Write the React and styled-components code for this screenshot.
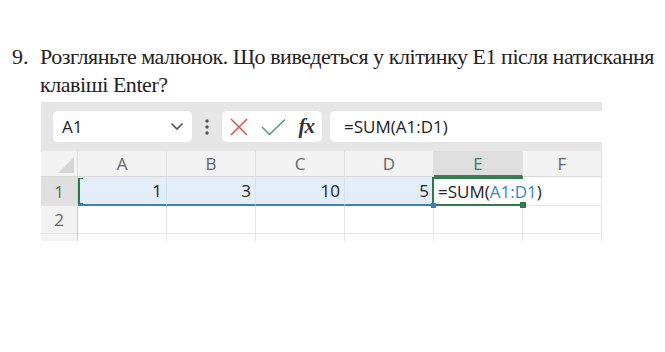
import React from "react";
import styled, { createGlobalStyle } from "styled-components";

const Global = createGlobalStyle`
body{
  margin:0;
  background:#fff;
}
`
const Page = styled.div`
width:665px;
height:352px;
overflow:hidden;
padding-top:43px;
box-sizing:border-box;
`
const Question = styled.div`
display:flex;
padding-left:12px;
font-family:"Liberation Serif", "Times New Roman", serif;
font-size:22px;
line-height:28px;
color:#222;
`
const Num = styled.div`
width:28px;
flex:none;
`
const QText = styled.div`
width:625px;
letter-spacing:-0.45px;
`
const Sheet = styled.div`
margin:3px 0 0 41px;
width:561px;
height:139px;
overflow:hidden;
font-family:"Open Sans", "Noto Sans", sans-serif;
`
const Toolbar = styled.div`
height:49px;
background:#e6e6e6;
display:flex;
align-items:center;
padding-left:12px;
box-sizing:border-box;
`
const NameBox = styled.div`
width:139px;
height:31px;
background:#fff;
border-radius:5px;
display:flex;
align-items:center;
justify-content:space-between;
padding:0 8px 0 9px;
box-sizing:border-box;
font-size:17px;
color:#222;
`
const Dots = styled.div`
width:30px;
display:flex;
justify-content:center;
`
const BtnBox = styled.div`
width:100px;
height:31px;
background:#fff;
border-radius:5px;
display:flex;
align-items:center;
justify-content:space-between;
padding:0 8px 0 7px;
box-sizing:border-box;
`
const Fx = styled.span`
font-family:"Liberation Serif", serif;
font-style:italic;
font-weight:bold;
font-size:21px;
color:#333;
letter-spacing:-1px;
`
const FormulaBox = styled.div`
flex:1;
margin-left:8px;
height:31px;
background:#fff;
border-radius:5px 0 0 5px;
display:flex;
align-items:center;
padding-left:14px;
font-size:17px;
color:#222;
`
const Grid = styled.div`
display:grid;
grid-template-columns:37px repeat(5, 89px) 79px;
grid-auto-rows:28px;
grid-template-rows:26px 29px 28px 28px;
`
const Head = styled.div`
background:${p => p.active ? "#dedede" : "#f3f3f3"};
color:${p => p.active ? "#3f7f57" : "#666"};
border-right:1px solid #e0e0e0;
border-bottom:${p => p.active ? "2px solid #3b7d52" : "1px solid #d8d8d8"};
box-sizing:border-box;
display:flex;
align-items:center;
justify-content:center;
font-size:17px;
`
const Corner = styled(Head)`
position:relative;
overflow:hidden;
`
const RowHead = styled.div`
background:${p => p.active ? "#e0e0e0" : "#f3f3f3"};
color:${p => p.active ? "#4d7a5d" : "#666"};
border-right:1px solid #d0d0d0;
border-bottom:1px solid #e2e2e2;
box-sizing:border-box;
display:flex;
align-items:center;
justify-content:center;
font-size:17px;
`
const Cell = styled.div`
position:relative;
background:${p => p.sel ? "#e4eef9" : "#fff"};
border-right:1px solid ${p => p.sel ? "#d6e2ee" : "#e4e4e4"};
border-bottom:${p => p.sel ? "2px solid #3a80c0" : "1px solid #e4e4e4"};
box-sizing:border-box;
display:flex;
align-items:center;
justify-content:flex-end;
padding-right:4px;
font-size:17px;
color:#222;
`
const Bracket = styled.div`
position:absolute;
left:0;
top:1px;
bottom:0;
width:3px;
border-left:2px solid #2e7a4c;
border-top:1px solid #2e7a4c;
border-bottom:1px solid #2e7a4c;
`
const SelHandle = styled.div`
position:absolute;
right:-3px;
bottom:-4px;
width:5px;
height:5px;
background:#3a80c0;
z-index:2;
`
const EditCell = styled.div`
position:relative;
z-index:1;
border-top:2px solid #2e7a4c;
border-bottom:2px solid #2e7a4c;
box-sizing:border-box;
display:flex;
align-items:center;
padding-left:4px;
white-space:nowrap;
font-size:17px;
color:#222;
`
const Ref = styled.span`
color:#3b88c4;
`
const Caret = styled.span`
display:inline-block;
width:1.5px;
height:21px;
background:#222;
margin-left:1px;
`
const Handle = styled.div`
position:absolute;
right:-3px;
bottom:-4px;
width:6px;
height:6px;
background:#2e7a4c;
`

const cols = ["A", "B", "C", "D", "E", "F"]

function App() {
  return (
    <Page>
      <Global />
      <Question>
        <Num>9.</Num>
        <QText>Розгляньте малюнок. Що виведеться у клітинку Е1 після натискання клавіші Enter?</QText>
      </Question>
      <Sheet>
        <Toolbar>
          <NameBox>
            <span>A1</span>
            <svg width="14" height="9" viewBox="0 0 14 9">
              <path d="M1.5 1.5 L7 7 L12.5 1.5" fill="none" stroke="#555" strokeWidth="1.6" />
            </svg>
          </NameBox>
          <Dots>
            <svg width="4" height="16" viewBox="0 0 4 16">
              <circle cx="2" cy="2" r="1.7" fill="#555" />
              <circle cx="2" cy="8" r="1.7" fill="#555" />
              <circle cx="2" cy="14" r="1.7" fill="#555" />
            </svg>
          </Dots>
          <BtnBox>
            <svg width="20" height="20" viewBox="0 0 20 20">
              <path d="M2 2 L18 18 M18 2 L2 18" stroke="#e0524f" strokeWidth="1.6" />
            </svg>
            <svg width="25" height="18" viewBox="0 0 25 18">
              <path d="M1 9 L8.5 16.5 L24 1.5" fill="none" stroke="#4aa36c" strokeWidth="1.6" />
            </svg>
            <Fx>fx</Fx>
          </BtnBox>
          <FormulaBox>=SUM(A1:D1)</FormulaBox>
        </Toolbar>
        <Grid>
          <Corner>
            <svg width="16" height="16" viewBox="0 0 16 16" style={{ position: "absolute", right: 3, bottom: 3 }}>
              <path d="M16 0 L16 16 L0 16 Z" fill="#d6d6d6" />
            </svg>
          </Corner>
          {cols.map(c => <Head key={c} active={c === "E"}>{c}</Head>)}

          <RowHead active>1</RowHead>
          <Cell sel><Bracket />1</Cell>
          <Cell sel>3</Cell>
          <Cell sel>10</Cell>
          <Cell sel>5<SelHandle /></Cell>
          <EditCell>
            <Bracket style={{ left: -2, top: -2, bottom: -2 }} />
            =SUM(<Ref>A1:D1</Ref>)<Caret />
            <Handle />
          </EditCell>
          <Cell />

          <RowHead>2</RowHead>
          {cols.map(c => <Cell key={c} />)}
          <RowHead>3</RowHead>
          {cols.map(c => <Cell key={c} />)}
        </Grid>
      </Sheet>
    </Page>
  );
}

export default App;
